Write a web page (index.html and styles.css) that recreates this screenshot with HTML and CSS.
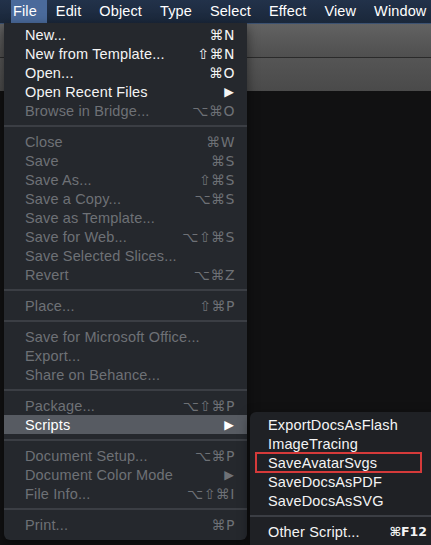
FILE: index.html
```html
<!DOCTYPE html>
<html>
<head>
<meta charset="utf-8">
<link rel="stylesheet" href="styles.css">
</head>
<body>
<div class="screen">
  <nav class="menubar">
    <span class="mb-item mb-active">File</span>
    <span class="mb-item">Edit</span>
    <span class="mb-item">Object</span>
    <span class="mb-item">Type</span>
    <span class="mb-item">Select</span>
    <span class="mb-item">Effect</span>
    <span class="mb-item">View</span>
    <span class="mb-item">Window</span>
  </nav>
  <div class="workspace">
    <div class="panel panel-top"></div>
    <div class="panel panel-second"></div>
    <div class="canvas"></div>
  </div>

  <div class="menu file-menu">
    <div class="row"><span>New...</span><span class="key">⌘N</span></div>
    <div class="row"><span>New from Template...</span><span class="key">⇧⌘N</span></div>
    <div class="row"><span>Open...</span><span class="key">⌘O</span></div>
    <div class="row"><span>Open Recent Files</span><span class="arrow">▶</span></div>
    <div class="row off"><span>Browse in Bridge...</span><span class="key">⌥⌘O</span></div>
    <div class="sep"></div>
    <div class="row off"><span>Close</span><span class="key">⌘W</span></div>
    <div class="row off"><span>Save</span><span class="key">⌘S</span></div>
    <div class="row off"><span>Save As...</span><span class="key">⇧⌘S</span></div>
    <div class="row off"><span>Save a Copy...</span><span class="key">⌥⌘S</span></div>
    <div class="row off"><span>Save as Template...</span></div>
    <div class="row off"><span>Save for Web...</span><span class="key">⌥⇧⌘S</span></div>
    <div class="row off"><span>Save Selected Slices...</span></div>
    <div class="row off"><span>Revert</span><span class="key">⌥⌘Z</span></div>
    <div class="sep"></div>
    <div class="row off"><span>Place...</span><span class="key">⇧⌘P</span></div>
    <div class="sep"></div>
    <div class="row off"><span>Save for Microsoft Office...</span></div>
    <div class="row off"><span>Export...</span></div>
    <div class="row off"><span>Share on Behance...</span></div>
    <div class="sep"></div>
    <div class="row off"><span>Package...</span><span class="key">⌥⇧⌘P</span></div>
    <div class="row hot"><span>Scripts</span><span class="arrow">▶</span></div>
    <div class="sep"></div>
    <div class="row off"><span>Document Setup...</span><span class="key">⌥⌘P</span></div>
    <div class="row off"><span>Document Color Mode</span><span class="arrow">▶</span></div>
    <div class="row off"><span>File Info...</span><span class="key">⌥⇧⌘I</span></div>
    <div class="sep"></div>
    <div class="row off"><span>Print...</span><span class="key">⌘P</span></div>
  </div>

  <div class="menu sub-menu">
    <div class="row"><span>ExportDocsAsFlash</span></div>
    <div class="row"><span>ImageTracing</span></div>
    <div class="row marked"><span>SaveAvatarSvgs</span></div>
    <div class="row"><span>SaveDocsAsPDF</span></div>
    <div class="row"><span>SaveDocsAsSVG</span></div>
    <div class="sep"></div>
    <div class="row"><span>Other Script...</span><span class="key small">⌘F12</span></div>
  </div>
</div>
</body>
</html>
```

FILE: styles.css
```css
html, body {
  margin: 0;
  padding: 0;
  background: #111112;
  overflow: hidden;
}

.screen {
  position: relative;
  width: 431px;
  height: 545px;
  overflow: hidden;
  font-family: "Liberation Sans", Arial, sans-serif;
}

.menubar {
  display: flex;
  height: 23px;
  align-items: stretch;
  background: linear-gradient(#22324a, #1a273a);
  color: #ffffff;
  font-size: 14.5px;
  letter-spacing: 0.12px;
  white-space: nowrap;
}

.mb-item {
  display: flex;
  align-items: center;
  padding: 0 9px;
  line-height: 23px;
  flex-shrink: 0;
}

.mb-active {
  margin-left: 11px;
  padding: 0 10px 0 2px;
  background: #4a6a9b;
}

.workspace {
  display: flex;
  flex-direction: column;
  height: 522px;
}

.panel-top {
  height: 33px;
  border-top: 1px solid #3c5272;
  background: linear-gradient(#626262, #4f4f4f);
  border-bottom: 1px solid #2a2a2a;
}

.panel-second {
  height: 33px;
  background: linear-gradient(#555555, #4a4a4a);
}

.canvas {
  flex: 1;
  background: #111112;
}

.menu {
  position: absolute;
  display: flex;
  flex-direction: column;
  font-size: 14.5px;
  letter-spacing: 0.15px;
  color: #f4f4f4;
  box-shadow: 0 4px 12px rgba(0, 0, 0, 0.5);
}

.file-menu {
  left: 4px;
  top: 23px;
  width: 243px;
  padding: 2px 0 6px;
  background: #25282d;
  border-radius: 0 0 6px 6px;
}

.sub-menu {
  left: 250px;
  top: 412px;
  width: 200px;
  padding: 3px 0 10px;
  background: #1f2125;
  border-radius: 6px 0 0 0;
}

.row {
  display: flex;
  justify-content: space-between;
  align-items: center;
  height: 19px;
  padding: 0 12px 0 21px;
  white-space: nowrap;
}

.sub-menu .row {
  padding: 0 23px 0 18px;
  position: relative;
}

.row.off {
  color: #6e7176;
}

.row.hot {
  background: #575b62;
  color: #ffffff;
}

.key {
  font-family: "DejaVu Sans", sans-serif;
  font-size: 14px;
  letter-spacing: 0.5px;
}

.key.small {
  font-size: 12.5px;
  letter-spacing: 0;
  font-weight: bold;
}

.arrow {
  font-family: "DejaVu Sans", sans-serif;
  font-size: 12.5px;
  padding-right: 1px;
}

.sep {
  height: 2px;
  margin: 5px 0;
  background: #3b3e44;
}

.marked::after {
  content: "";
  position: absolute;
  left: 5px;
  top: -1px;
  width: 163px;
  height: 17px;
  border: 2px solid #d53a3a;
}
```
